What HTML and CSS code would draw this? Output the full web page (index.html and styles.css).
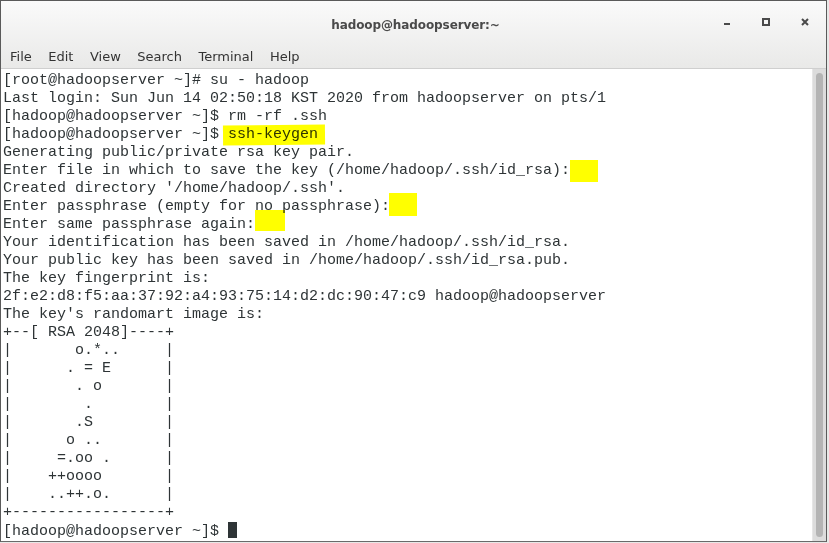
FILE: index.html
```html
<!DOCTYPE html>
<html>
<head>
<meta charset="utf-8">
<link rel="stylesheet" href="styles.css">
</head>
<body>
<div class="window">
  <header class="header">
    <div class="titlebar">
      <div class="title">hadoop@hadoopserver:~</div>
      <div class="controls">
        <svg class="ctl" width="10" height="10" viewBox="0 0 10 10"><rect x="2" y="6" width="6" height="2" fill="#4a4a4a"/></svg>
        <svg class="ctl" width="10" height="10" viewBox="0 0 10 10"><rect x="2" y="2" width="6" height="6" fill="none" stroke="#4a4a4a" stroke-width="2"/></svg>
        <svg class="ctl" width="10" height="10" viewBox="0 0 10 10"><path d="M2 2 L8 8 M8 2 L2 8" stroke="#4a4a4a" stroke-width="2"/></svg>
      </div>
    </div>
    <nav class="menu">
      <span>File</span><span>Edit</span><span>View</span><span>Search</span><span>Terminal</span><span>Help</span>
    </nav>
  </header>
  <div class="body">
    <div class="term">
<pre class="text">[root@hadoopserver ~]# su - hadoop
Last login: Sun Jun 14 02:50:18 KST 2020 from hadoopserver on pts/1
[hadoop@hadoopserver ~]$ rm -rf .ssh
[hadoop@hadoopserver ~]$ ssh-keygen
Generating public/private rsa key pair.
Enter file in which to save the key (/home/hadoop/.ssh/id_rsa): 
Created directory '/home/hadoop/.ssh'.
Enter passphrase (empty for no passphrase): 
Enter same passphrase again: 
Your identification has been saved in /home/hadoop/.ssh/id_rsa.
Your public key has been saved in /home/hadoop/.ssh/id_rsa.pub.
The key fingerprint is:
2f:e2:d8:f5:aa:37:92:a4:93:75:14:d2:dc:90:47:c9 hadoop@hadoopserver
The key's randomart image is:
+--[ RSA 2048]----+
|       o.*..     |
|      . = E      |
|       . o       |
|        .        |
|       .S        |
|      o ..       |
|     =.oo .      |
|    ++oooo       |
|    ..++.o.      |
+-----------------+
[hadoop@hadoopserver ~]$ <span class="cursor"></span></pre>
      <div class="hl hl1"></div>
      <div class="hl hl2"></div>
      <div class="hl hl3"></div>
      <div class="hl hl4"></div>
    </div>
    <div class="scrollbar"><div class="thumb"></div></div>
  </div>
</div>
</body>
</html>
```
FILE: styles.css
```css
html, body {
  margin: 0;
  padding: 0;
  background: #e8e8e7;
}
.window {
  width: 825px;
  height: 540px;
  border: 1px solid #5a5a5a;
  border-bottom: 1px solid #6a6a6a;
  display: flex;
  flex-direction: column;
  background: #fff;
  overflow: hidden;
}
.header {
  height: 67px;
  background: linear-gradient(#fafafa, #e9e9e8);
  border-bottom: 1px solid #cfcfcf;
  display: flex;
  flex-direction: column;
  position: relative;
}
.titlebar {
  height: 45px;
  display: flex;
  align-items: center;
  justify-content: center;
  position: relative;
}
.title {
  font-family: "DejaVu Sans", sans-serif;
  font-weight: bold;
  font-size: 12px;
  letter-spacing: -0.1px;
  color: #4a4a4a;
  margin-left: 4px;
  margin-top: 2px;
}
.controls {
  position: absolute;
  right: 16px;
  top: 16px;
  display: flex;
  gap: 29px;
}
.menu {
  display: flex;
  gap: 0;
  padding-left: 9px;
  font-family: "DejaVu Sans", sans-serif;
  font-size: 13px;
  color: #333;
  margin-top: 3px;
}
.menu span {
  margin-right: 16.5px;
}
.body {
  flex: 1;
  display: flex;
}
.term {
  flex: 1;
  position: relative;
  background: #fff;
}
.text {
  margin: 0;
  padding: 3px 0 0 2px;
  font-family: "Liberation Mono", monospace;
  font-size: 15px;
  line-height: 18px;
  color: #2e3436;
}
.cursor {
  display: inline-block;
  width: 9px;
  height: 16px;
  background: #2e3436;
  vertical-align: -3px;
}
.hl {
  position: absolute;
  background: #ffff00;
  mix-blend-mode: multiply;
}
.hl1 { left: 222px; top: 56px; width: 102px; height: 20px; transform: rotate(-0.5deg); }
.hl2 { left: 569px; top: 91px; width: 28px; height: 22px; }
.hl3 { left: 388px; top: 124px; width: 28px; height: 23px; }
.hl4 { left: 254px; top: 141px; width: 30px; height: 21px; }
.scrollbar {
  width: 13px;
  background: #dcdcdc;
  border-left: 1px solid #e6e6e6;
  position: relative;
}
.thumb {
  position: absolute;
  left: 3px;
  top: 4px;
  bottom: 4px;
  width: 7px;
  border-radius: 4px;
  background: #b4b4b4;
}
```
